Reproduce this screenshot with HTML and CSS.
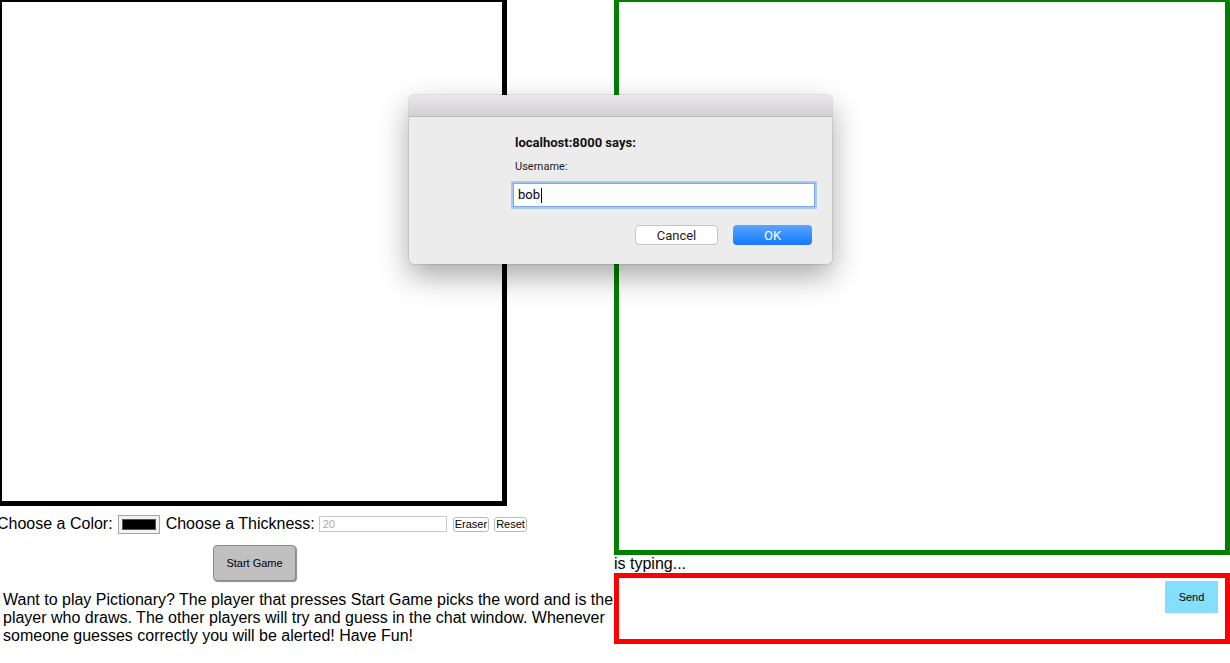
FILE: index.html
```html
<!DOCTYPE html>
<html>
<head>
<meta charset="utf-8">
<link rel="stylesheet" href="styles.css">
</head>
<body>
<div class="page">
  <div class="left">
    <div class="canvas"></div>
    <div class="controls">
      <span>Choose a Color:</span>
      <span class="color"><span class="swatch"></span></span>
      <span>Choose a Thickness:</span>
      <span class="thick">20</span>
      <span class="small-btn eraser">Eraser</span>
      <span class="small-btn">Reset</span>
    </div>
    <div class="start">Start Game</div>
    <p class="info">Want to play Pictionary? The player that presses Start Game picks the word and is the player who draws. The other players will try and guess in the chat window. Whenever someone guesses correctly you will be alerted! Have Fun!</p>
  </div>
  <div class="right">
    <div class="chat"></div>
    <div class="typing">is typing...</div>
    <div class="compose">
      <div class="msg"></div>
      <div class="send">Send</div>
    </div>
  </div>
</div>

<div class="dialog">
  <div class="titlebar"></div>
  <div class="dbody">
    <div class="dtitle">localhost:8000 says:</div>
    <div class="dlabel">Username:</div>
    <div class="dinput">bob<span class="caret"></span></div>
    <div class="dbuttons">
      <div class="dbtn cancel">Cancel</div>
      <div class="dbtn ok">OK</div>
    </div>
  </div>
</div>
</body>
</html>
```

FILE: styles.css
```css
html, body {
  margin: 0;
  padding: 0;
  background: #fff;
  overflow: hidden;
}
body {
  font-family: "Liberation Sans", Arial, sans-serif;
  font-size: 16px;
  color: #000;
  width: 1230px;
  height: 663px;
  position: relative;
}
.page {
  display: flex;
  margin: -3px 0 0 -3px;
}
.left {
  width: 617px;
  flex: none;
}
.canvas {
  width: 500px;
  height: 499px;
  border: 5px solid #000;
}
.controls {
  display: flex;
  align-items: center;
  height: 22px;
  margin-top: 7px;
  white-space: nowrap;
  line-height: 18px;
}
.color {
  display: inline-flex;
  width: 42px;
  height: 19px;
  border: 1px solid #a5a5a5;
  background: #f2f2f2;
  margin: 0 6px 0 5px;
  padding: 3px 3px;
  box-sizing: border-box;
}
.swatch {
  flex: 1;
  background: #000;
  border: 1px solid #555;
}
.thick {
  display: inline-block;
  width: 128px;
  height: 16px;
  box-sizing: border-box;
  border: 1px solid #c9c9c9;
  margin-left: 4px;
  font-size: 11px;
  line-height: 14px;
  color: #a9a9a9;
  padding-left: 3px;
}
.small-btn {
  display: inline-block;
  height: 15px;
  box-sizing: border-box;
  border: 1px solid #b9b9b9;
  border-radius: 3px;
  font-size: 11px;
  line-height: 13px;
  padding: 0 1px;
  margin-left: 5px;
  background: #fff;
}
.eraser {
  margin-left: 6px;
}
.start {
  width: 83px;
  height: 36px;
  box-sizing: border-box;
  margin: 10px 0 0 216px;
  background: #c0c0c0;
  border: 1px solid #8a8a8a;
  border-radius: 4px;
  box-shadow: 1px 1px 1px rgba(0,0,0,0.45);
  font-size: 11px;
  display: flex;
  align-items: center;
  justify-content: center;
}
.info {
  margin: 10px 0 0 0;
  padding-left: 6px;
  width: 612px;
  line-height: 18px;
}
.right {
  width: 616px;
  flex: none;
}
.chat {
  height: 548px;
  border: 5px solid #008000;
}
.typing {
  line-height: 18px;
}
.compose {
  height: 58px;
  border: 5px solid #ff0000;
  display: flex;
  align-items: flex-start;
  padding: 3px 7px 0 0;
  box-sizing: content-box;
}
.msg {
  flex: 1;
}
.send {
  width: 53px;
  height: 32px;
  background: #84defd;
  font-size: 11px;
  display: flex;
  align-items: center;
  justify-content: center;
}
.dialog {
  position: absolute;
  left: 409px;
  top: 95px;
  width: 423px;
  height: 169px;
  border-radius: 5px;
  overflow: hidden;
  background: #ececec;
  box-shadow: 0 12px 30px rgba(0,0,0,0.35), 0 0 0 1px rgba(0,0,0,0.08);
  font-family: Roboto, "Liberation Sans", sans-serif;
}
.titlebar {
  height: 21px;
  background: linear-gradient(#e9e7e9, #d3d1d3);
  border-bottom: 1px solid #b8b8b8;
}
.dbody {
  padding: 18px 17px 0 104px;
}
.dtitle {
  font-weight: bold;
  font-size: 13px;
  line-height: 16px;
  color: #111;
  padding-left: 2px;
}
.dlabel {
  font-size: 11px;
  line-height: 13px;
  margin-top: 9px;
  color: #222;
  padding-left: 2px;
}
.dinput {
  margin-top: 10px;
  height: 24px;
  box-sizing: border-box;
  background: #fff;
  border: 1px solid #7ea9e6;
  box-shadow: 0 0 0 2px #a6c8f3;
  font-size: 13px;
  line-height: 22px;
  padding-left: 4px;
  width: 302px;
  color: #000;
  display: flex;
  align-items: center;
}
.caret {
  display: inline-block;
  width: 1px;
  height: 15px;
  background: #000;
  margin-left: 1px;
}
.dbuttons {
  display: flex;
  justify-content: flex-end;
  gap: 15px;
  margin-top: 18px;
  padding-right: 3px;
}
.dbtn {
  height: 20px;
  box-sizing: border-box;
  border-radius: 4px;
  font-size: 13px;
  display: flex;
  align-items: center;
  justify-content: center;
}
.cancel {
  width: 83px;
  background: #fff;
  border: 1px solid #c5c5c5;
  color: #222;
}
.ok {
  width: 79px;
  background: linear-gradient(#5aa6ff, #1578fd);
  color: #fff;
}
```
